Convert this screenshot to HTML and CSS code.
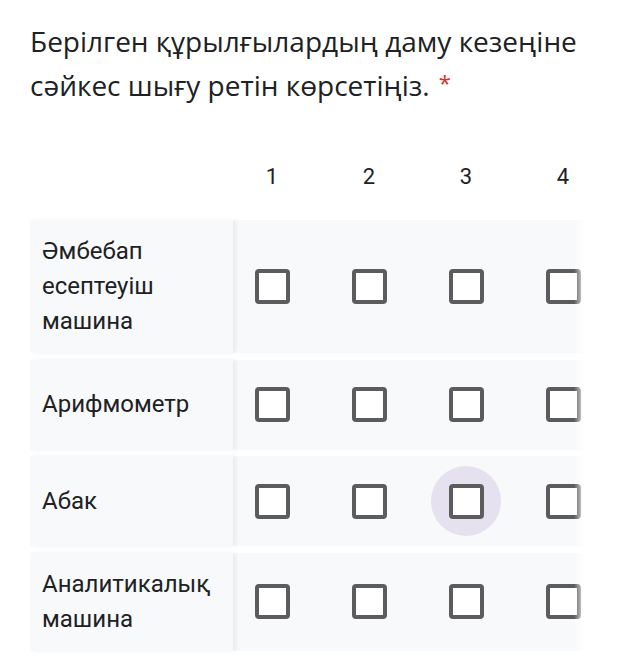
FILE: index.html
```html
<!DOCTYPE html>
<html lang="kk">
<head>
  <meta charset="UTF-8">
  <title>Сұрақ</title>
  <meta name="viewport" content="width=device-width, initial-scale=1.0">
  <link rel="stylesheet" href="styles.css">
</head>
<body>

  <div class="question">
    <h2 class="title">Берілген құрылғылардың даму кезеңіне сәйкес шығу ретін көрсетіңіз.<span class="req">*</span></h2>

    <div class="grid">
      <div class="head">
        <div class="label-cell"></div>
        <div class="col">1</div>
        <div class="col">2</div>
        <div class="col">3</div>
        <div class="col">4</div>
      </div>

      <div class="row">
        <div class="label-cell">Әмбебап есептеуіш машина</div>
        <div class="col"><span class="ripple"><span class="box"></span></span></div>
        <div class="col"><span class="ripple"><span class="box"></span></span></div>
        <div class="col"><span class="ripple"><span class="box"></span></span></div>
        <div class="col"><span class="ripple"><span class="box"></span></span></div>
      </div>

      <div class="row">
        <div class="label-cell">Арифмометр</div>
        <div class="col"><span class="ripple"><span class="box"></span></span></div>
        <div class="col"><span class="ripple"><span class="box"></span></span></div>
        <div class="col"><span class="ripple"><span class="box"></span></span></div>
        <div class="col"><span class="ripple"><span class="box"></span></span></div>
      </div>

      <div class="row">
        <div class="label-cell">Абак</div>
        <div class="col"><span class="ripple"><span class="box"></span></span></div>
        <div class="col"><span class="ripple"><span class="box"></span></span></div>
        <div class="col"><span class="ripple hover"><span class="box"></span></span></div>
        <div class="col"><span class="ripple"><span class="box"></span></span></div>
      </div>

      <div class="row">
        <div class="label-cell">Аналитикалық машина</div>
        <div class="col"><span class="ripple"><span class="box"></span></span></div>
        <div class="col"><span class="ripple"><span class="box"></span></span></div>
        <div class="col"><span class="ripple"><span class="box"></span></span></div>
        <div class="col"><span class="ripple"><span class="box"></span></span></div>
      </div>

      <div class="fade"></div>
    </div>
  </div>

</body>
</html>
```

FILE: styles.css
```css
body {
  font-family: Roboto, "Noto Sans", sans-serif;
  background: #fff;
  color: #202124;
  margin: 0;
  padding: 0;
}

.question {
  padding: 19px 0 0 30px;
}

.title {
  font-family: "Open Sans", Roboto, sans-serif;
  font-weight: normal;
  font-size: 28px;
  line-height: 44px;
  margin: 0;
  width: 580px;
}

.req {
  color: #d93025;
  font-size: 22px;
  line-height: 1;
  margin-left: 9px;
  vertical-align: 5px;
}

.grid {
  position: relative;
  width: 556px;
  margin-top: 31px;
  overflow: hidden;
}

.head,
.row {
  display: flex;
  align-items: center;
}

.head {
  height: 76px;
  margin-bottom: 6px;
  font-size: 22px;
}

.row {
  background: #f8f9fa;
  margin-bottom: 6.5px;
  min-height: 90px;
}

.label-cell {
  width: 191px;
  flex-shrink: 0;
  align-self: stretch;
  display: flex;
  align-items: center;
  padding: 14px 0 14px 12px;
  font-size: 24px;
  line-height: 35px;
  box-sizing: content-box;
}

.row .label-cell {
  background: #f8f9fa;
  box-shadow: 3px 0 4px rgba(0, 0, 0, 0.06);
  position: relative;
}

.head .label-cell {
  padding: 0 0 0 12px;
}

.col {
  width: 78px;
  flex-shrink: 0;
  margin-left: 19px;
  display: flex;
  justify-content: center;
  align-items: center;
}

.col:nth-child(2) {
  margin-left: 0;
}

.ripple {
  width: 70px;
  height: 70px;
  border-radius: 50%;
  display: flex;
  justify-content: center;
  align-items: center;
}

.ripple.hover {
  background: #e5e1ee;
}

.box {
  display: block;
  width: 27px;
  height: 27px;
  border: 4px solid #5c5c5f;
  border-radius: 4px;
  background: #fff;
}

.fade {
  position: absolute;
  top: 0;
  right: 0;
  bottom: 0;
  width: 12px;
  background: linear-gradient(to right, rgba(255, 255, 255, 0), #fff);
}
```
